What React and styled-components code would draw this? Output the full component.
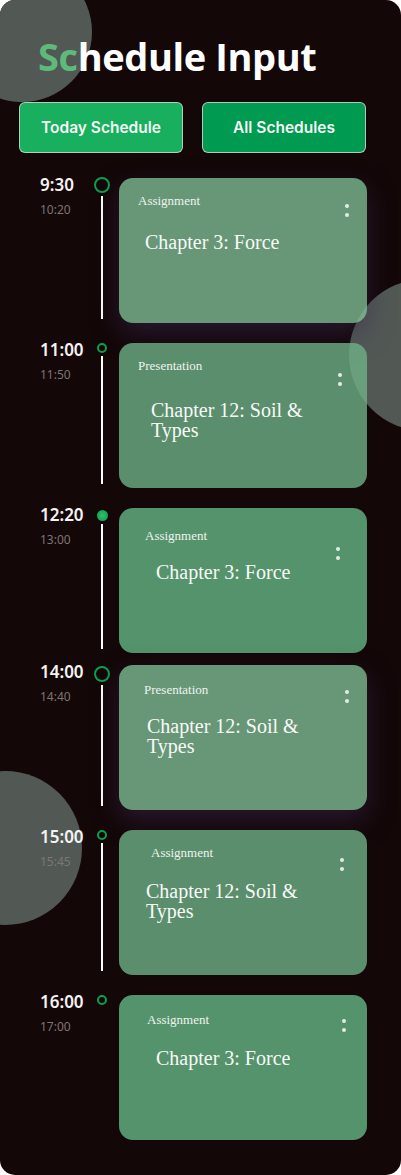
import React from "react";
import styled, { createGlobalStyle, css } from "styled-components";

const GlobalStyle = createGlobalStyle`
  html, body {
    margin: 0;
    padding: 0;
    background: #ffffff;
  }
  * {
    box-sizing: border-box;
  }
`;

// ly/ty: centre of label / first title line, lx/tx: left edge, dx/dy: dots corner (all from card top-left)
const schedule = [
  {
    id: 1,
    start: "9:30",
    end: "10:20",
    kind: "Assignment",
    title: "Chapter 3: Force",
    tone: "soft",
    marker: "ring",
    markerTop: -1,
    gap: 20,
    pad: { ly: 23, lx: 19, tx: 26, ty: 64, dx: 226, dy: 26 },
  },
  {
    id: 2,
    start: "11:00",
    end: "11:50",
    kind: "Presentation",
    title: "Chapter 12: Soil & Types",
    tone: "mid",
    marker: "small",
    markerTop: 0,
    gap: 20,
    pad: { ly: 23, lx: 19, tx: 32, ty: 67, dx: 219, dy: 30 },
  },
  {
    id: 3,
    start: "12:20",
    end: "13:00",
    kind: "Assignment",
    title: "Chapter 3: Force",
    tone: "deep",
    marker: "dot",
    markerTop: 2,
    gap: 12,
    pad: { ly: 28, lx: 26, tx: 37, ty: 64, dx: 217, dy: 39 },
  },
  {
    id: 4,
    start: "14:00",
    end: "14:40",
    kind: "Presentation",
    title: "Chapter 12: Soil & Types",
    tone: "soft",
    marker: "ring",
    markerTop: 1,
    gap: 20,
    pad: { ly: 25, lx: 25, tx: 28, ty: 61, dx: 226, dy: 25 },
  },
  {
    id: 5,
    start: "15:00",
    end: "15:45",
    kind: "Assignment",
    title: "Chapter 12: Soil & Types",
    tone: "mid",
    marker: "small",
    markerTop: 0,
    gap: 20,
    pad: { ly: 23, lx: 32, tx: 27, ty: 61, dx: 221, dy: 28 },
  },
  {
    id: 6,
    start: "16:00",
    end: "17:00",
    kind: "Assignment",
    title: "Chapter 3: Force",
    tone: "deep",
    marker: "small",
    markerTop: 0,
    gap: 0,
    pad: { ly: 25, lx: 28, tx: 37, ty: 63, dx: 223, dy: 24 },
  },
];

const CardItem = ({ kind, title, tone, pad }) => {
  const headTop = pad.ly - 8; // label line is 16px tall
  const titleTop = pad.ty - 10 - (pad.ly + 8); // title line is 20px tall
  return (
    <Card $tone={tone} $top={headTop} $lx={pad.lx}>
      <CardHead>
        <Kind>{kind}</Kind>
        <Dots $left={pad.dx} $top={pad.dy - headTop}>
          <Dot />
          <Dot />
        </Dots>
      </CardHead>
      <CardTitle $shift={pad.tx - pad.lx} $top={titleTop}>
        {title}
      </CardTitle>
    </Card>
  );
};

export default function App() {
  return (
    <>
      <GlobalStyle />
      <Page>
        <Blob $x={-48} $y={-38} $r={70} />
        <Blob $x={349} $y={279} $r={76} />
        <Blob $x={-72} $y={771} $r={77} />

        <Content>
          <Title>
            <Accent>Sc</Accent>hedule Input
          </Title>

          <ButtonRow>
            <TabButton $active>Today Schedule</TabButton>
            <TabButton>All Schedules</TabButton>
          </ButtonRow>

          <Timeline>
            {schedule.map((item, i) => (
              <Row key={item.id} $gap={item.gap}>
                <TimeCol>
                  <StartTime>{item.start}</StartTime>
                  <EndTime>{item.end}</EndTime>
                </TimeCol>
                <Rail>
                  <Marker $kind={item.marker} $top={item.markerTop} />
                  {i < schedule.length - 1 && <RailLine />}
                </Rail>
                <CardItem
                  kind={item.kind}
                  title={item.title}
                  tone={item.tone}
                  pad={item.pad}
                />
              </Row>
            ))}
          </Timeline>
        </Content>
      </Page>
    </>
  );
}

const Page = styled.div`
  position: relative;
  width: 401px;
  height: 1175px;
  background: #130708;
  border-radius: 15px;
  overflow: hidden;
`;

const Blob = styled.div`
  position: absolute;
  left: ${(p) => p.$x}px;
  top: ${(p) => p.$y}px;
  width: ${(p) => p.$r * 2}px;
  height: ${(p) => p.$r * 2}px;
  border-radius: 50%;
  background: #525955;
  z-index: 0;
`;

const Content = styled.div`
  position: relative;
  z-index: 1;
  padding: 32px 0 0;
`;

const Title = styled.h1`
  margin: 0 0 0 38px;
  font-family: "Open Sans", "Noto Sans", sans-serif;
  font-weight: 700;
  font-size: 38px;
  line-height: 48px;
  letter-spacing: -0.4px;
  color: #ffffff;
`;

const Accent = styled.span`
  color: #5dba7b;
`;

const ButtonRow = styled.div`
  display: flex;
  gap: 19px;
  margin: 22px 0 0 19px;
`;

const TabButton = styled.button`
  width: 164px;
  height: 51px;
  border: 1px solid rgba(210, 210, 210, 0.85);
  border-radius: 6px;
  background: ${(p) => (p.$active ? "#18b05f" : "#009a51")};
  color: #f4f7f4;
  font-family: Inter, "Noto Sans", sans-serif;
  font-weight: 600;
  font-size: 15.5px;
  padding: 0;
  cursor: pointer;
`;

const Timeline = styled.div`
  display: flex;
  flex-direction: column;
  margin-top: 25px;
  padding-left: 40px;
`;

const Row = styled.div`
  display: flex;
  align-items: stretch;
  padding-bottom: ${(p) => p.$gap}px;
`;

const TimeCol = styled.div`
  width: 52px;
  display: flex;
  flex-direction: column;
  font-family: "Noto Sans", "Open Sans", sans-serif;
`;

const StartTime = styled.span`
  margin-top: -2px;
  font-size: 17px;
  line-height: 18px;
  font-weight: 600;
  color: #f5f2f2;
`;

const EndTime = styled.span`
  margin-top: 8px;
  font-size: 12px;
  line-height: 16px;
  color: #7d7575;
`;

const Rail = styled.div`
  width: 20px;
  display: flex;
  flex-direction: column;
  align-items: center;
`;

const markerKinds = {
  ring: css`
    width: 16px;
    height: 16px;
    border: 2.3px solid #0b9f4f;
  `,
  small: css`
    width: 10px;
    height: 10px;
    border: 2.2px solid #0b9f4f;
  `,
  dot: css`
    width: 11px;
    height: 11px;
    background: radial-gradient(circle, #2cc36b 0%, #1aa957 60%, #108a45 100%);
  `,
};

const Marker = styled.span`
  flex: none;
  margin-top: ${(p) => p.$top}px;
  border-radius: 50%;
  ${(p) => markerKinds[p.$kind]}
`;

const RailLine = styled.span`
  flex: 1;
  width: 2px;
  margin: 3px 0 4px;
  background: #ffffff;
`;

const tones = {
  soft: css`
    background: rgba(125, 188, 148, 0.8);
    box-shadow: 0 10px 26px rgba(58, 38, 78, 0.55);
  `,
  mid: css`
    background: rgba(110, 176, 134, 0.8);
  `,
  deep: css`
    background: rgba(102, 182, 134, 0.8);
  `,
};

const Card = styled.div`
  width: 248px;
  height: 145px;
  margin-left: 7px;
  border-radius: 14px;
  padding: ${(p) => `${p.$top}px 0 0 ${p.$lx}px`};
  display: flex;
  flex-direction: column;
  ${(p) => tones[p.$tone]}
`;

const CardHead = styled.div`
  display: flex;
  align-items: flex-start;
  height: 16px;
`;

const Kind = styled.span`
  font-family: "Liberation Serif", "Times New Roman", serif;
  font-size: 13px;
  line-height: 16px;
  color: #eef3ef;
`;

const Dots = styled.span`
  display: flex;
  flex-direction: column;
  gap: 5px;
  margin-left: auto;
  margin-top: ${(p) => p.$top}px;
  margin-right: ${(p) => 248 - p.$left - 4}px;
`;

const Dot = styled.span`
  width: 4px;
  height: 4px;
  border-radius: 50%;
  background: #e4ebe6;
`;

const CardTitle = styled.div`
  margin-left: ${(p) => p.$shift}px;
  margin-top: ${(p) => p.$top}px;
  max-width: 178px;
  font-family: "Liberation Serif", "Times New Roman", serif;
  font-size: 20px;
  line-height: 20px;
  color: #f8faf8;
`;
